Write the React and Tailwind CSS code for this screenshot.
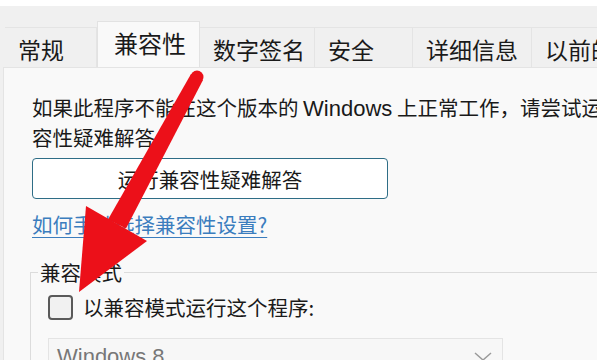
import React from 'react';

const tabs = [
  { label: '常规', w: 'w-[92px]' },
  { label: '兼容性', w: 'w-[103px]', active: true },
  { label: '数字签名', w: 'w-[115px]' },
  { label: '安全', w: 'w-[98px]' },
  { label: '详细信息', w: 'w-[119px]' },
  { label: '以前的版本', w: 'w-[140px]' },
];

function Arrow() {
  return (
    <svg className="absolute left-0 top-0 pointer-events-none" width="597" height="360" viewBox="0 0 597 360">
      <circle cx="197" cy="77" r="6.5" fill="#ec1019" />
      <polygon points="203,80 191,74 108,219.5 126,228.5" fill="#ec1019" />
      <polygon points="86,206 147,241 79,292" fill="#ec1019" />
    </svg>
  );
}

export default function App() {
  return (
    <div
      className="relative w-[597px] h-[360px] overflow-hidden bg-[#f0f0f0] text-[#1a1a1a]"
      style={{ fontFamily: '"Noto Sans CJK SC", "Noto Sans", sans-serif' }}
    >
      <div className="h-[6px] bg-white" />
      <div className="flex items-end h-[61px] pl-[5px]">
        {tabs.map((t) => (
          <div
            key={t.label}
            className={
              t.active
                ? `${t.w} shrink-0 h-[46px] px-[16px] pt-[1px] bg-[#f9f9f9] border-t border-l border-r border-[#e2e2e2] text-[24px] leading-[40px] whitespace-nowrap overflow-hidden`
                : `${t.w} shrink-0 h-[40px] px-[13px] bg-[#f0f0f0] border-t border-r border-[#e4e4e4] text-[23px] leading-[42px] whitespace-nowrap overflow-hidden`
            }
          >
            {t.label}
          </div>
        ))}
      </div>
      <div className="ml-[3px] h-[300px] bg-[#f9f9f9] border-l border-t border-[#e4e4e4] pt-[25px] pl-[28px] text-[20.5px] leading-[28px]">
        <div className="whitespace-nowrap">
          如果此程序不能在这个版本的 <span className="text-[22px] font-['Liberation_Sans','Noto_Sans',sans-serif]">Windows</span> 上正常工作，请尝试运行兼
        </div>
        <div className="whitespace-nowrap">容性疑难解答</div>
        <div className="mt-[7px] w-[356px] h-[41px] bg-white border border-[#2e6d86] rounded-[4px] flex items-center justify-center">
          运行兼容性疑难解答
        </div>
        <div className="mt-[11px] text-[#3b7dbe] underline underline-offset-[4px] decoration-[1px] whitespace-nowrap">
          如何手动选择兼容性设置?
        </div>
        <fieldset className="mt-[20px] -ml-[2px] border-t border-l border-[#dcdcdc] pl-[17px] pt-[7px] pb-[20px]">
          <legend className="-ml-[10px] px-[2px]">兼容模式</legend>
          <label className="flex items-center gap-[10px] whitespace-nowrap">
            <span className="w-[25px] h-[25px] rounded-[4px] border-2 border-[#5a5a5a] bg-[#f1f1f1]" />
            以兼容模式运行这个程序:
          </label>
          <div className="mt-[17px] w-[455px] h-[38px] border border-[#e4e4e4] bg-[#f7f7f7] flex items-center justify-between pl-[8px] pr-[10px] text-[#777]">
            <span className="text-[22px] font-['Liberation_Sans','Noto_Sans',sans-serif]">Windows 8</span>
            <svg width="18" height="10" viewBox="0 0 18 10">
              <path d="M1 1 L9 8 L17 1" fill="none" stroke="#9a9a9a" strokeWidth="1.5" />
            </svg>
          </div>
        </fieldset>
      </div>
      <Arrow />
    </div>
  );
}
